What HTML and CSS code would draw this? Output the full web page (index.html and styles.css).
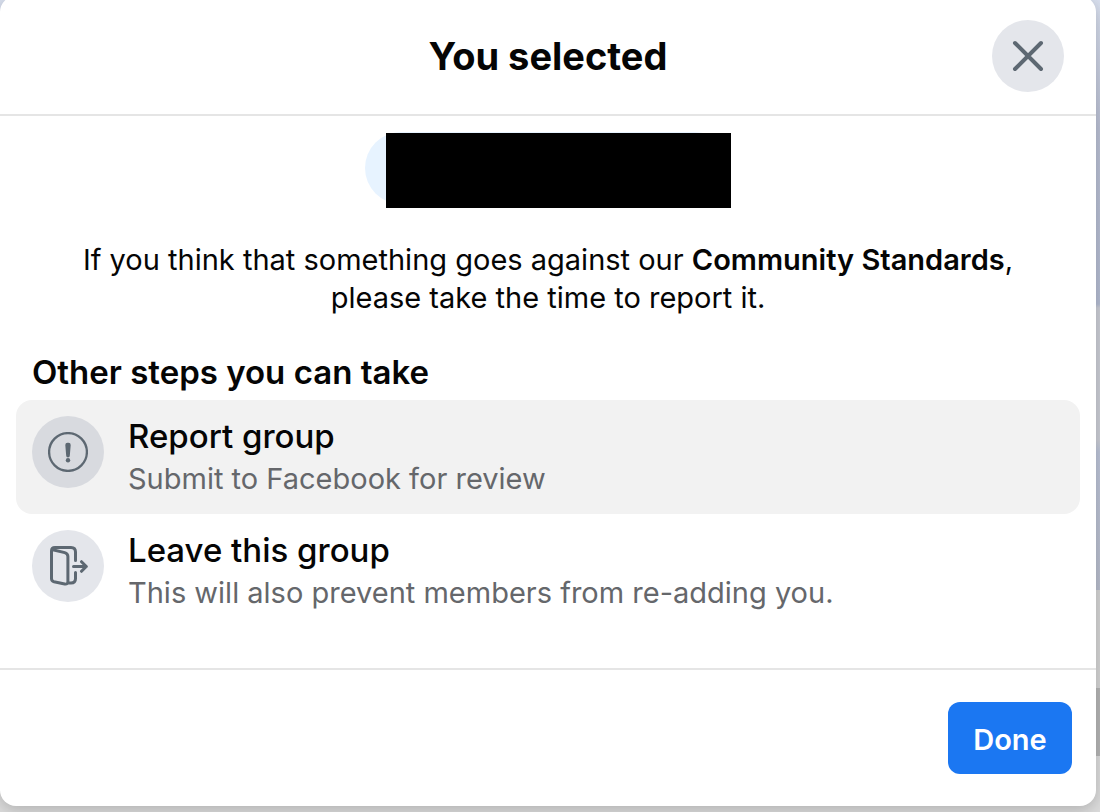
FILE: index.html
```html
<!DOCTYPE html>
<html lang="en">
<head>
    <meta charset="UTF-8">
    <meta name="viewport" content="width=device-width, initial-scale=1.0">
    <title>You selected</title>
    <link rel="stylesheet" href="styles.css">
</head>
<body>
    <main class="dialog">
        <header class="dialog-header">
            <h1>You selected</h1>
            <button type="button" class="close-button" aria-label="Close">
                <svg width="40" height="40" viewBox="0 0 40 40" fill="none" stroke="currentColor" stroke-width="4" stroke-linecap="round">
                    <path d="M7 7l26 26M33 7L7 33"/>
                </svg>
            </button>
        </header>

        <div class="dialog-body">
            <div class="selected-tag"><span class="redacted"></span></div>
            <p class="notice">If you think that something goes against our <b>Community Standards</b>, please take the time to report it.</p>

            <h2>Other steps you can take</h2>
            <button type="button" class="step active">
                <span class="step-icon">
                    <svg width="40" height="40" viewBox="0 0 40 40">
                        <circle cx="20" cy="20" r="18.9" fill="none" stroke="currentColor" stroke-width="2.3"/>
                        <path d="M17.3 12.9a2.2 2.2 0 0 1 2.2-2.2h1a2.2 2.2 0 0 1 2.2 2.2l-.9 10.8a1.7 1.7 0 0 1-3.6 0z" fill="currentColor"/>
                        <circle cx="20" cy="28.2" r="2.2" fill="currentColor"/>
                    </svg>
                </span>
                <span class="step-text">
                    <span class="step-title">Report group</span>
                    <span class="step-info">Submit to Facebook for review</span>
                </span>
            </button>
            <button type="button" class="step">
                <span class="step-icon">
                    <svg width="40" height="40" viewBox="0 0 40 40" fill="none" stroke="currentColor" stroke-width="3" stroke-linecap="round" stroke-linejoin="round">
                        <path d="M3.7 3.5l13 3.1q3.2.8 3.2 4v24.8q0 3.3-3.2 2.6L6 35.8q-2.5-.6-2.5-3.2V5q0-3.5 3.5-3.5h16q4.5 0 4.5 4.5v8.5M27.5 26.5v6q0 4.5-4.5 4.5h-3"/>
                        <path d="M25.5 20.5h12.7M33.5 15.7l4.8 4.8-4.8 4.8"/>
                    </svg>
                </span>
                <span class="step-text">
                    <span class="step-title">Leave this group</span>
                    <span class="step-info">This will also prevent members from re-adding you.</span>
                </span>
            </button>
        </div>

        <footer class="dialog-footer">
            <button type="button" class="done-button">Done</button>
        </footer>
    </main>
</body>
</html>
```
FILE: styles.css
```css
* {
    box-sizing: border-box;
}
body {
    margin: 0;
    min-height: 100vh;
    overflow: hidden;
    font-family: Inter, "Liberation Sans", sans-serif;
    color: #050505;
    /* dimmed page behind the dialog */
    background: linear-gradient(#d9e0ef 0, #bac0d4 128px, #b4bcd2 304px, #cbcdd5 308px, #cbcdd5 440px, #bcc4d8 452px, #b8bdcc 590px, #d4d4d4 590px, #d4d4d4 688px, #b5b5b5 688px, #b5b5b5 756px, #dcdcdc 756px);
}
h1, h2, p {
    margin: 0;
}
button {
    border: 0;
    font-family: inherit;
    cursor: pointer;
}

.dialog {
    margin: -4px 4px 0 0;
    background-color: white;
    border-radius: 16px;
    box-shadow: 0 4px 16px rgba(0, 0, 0, 0.2);
}
.dialog-header {
    display: grid;
    grid-template-columns: 72px 1fr 72px;
    align-items: center;
    padding: 24px 32px 22px;
    border-bottom: 2px solid #e5e5e5;
}
.dialog-header h1 {
    grid-column: 2;
    font-size: 38px;
    line-height: 48px;
    font-weight: 700;
    text-align: center;
}
.close-button {
    display: flex;
    align-items: center;
    justify-content: center;
    width: 72px;
    height: 72px;
    padding: 0;
    border-radius: 50%;
    background-color: #e4e6eb;
    color: #5d6872;
}

.dialog-body {
    padding: 16px 16px 40px;
}
.selected-tag {
    position: relative;
    width: 366px;
    height: 72px;
    margin: 0 auto;
    border-radius: 36px;
    background-color: #e7f3ff;
}
/* black bar laid over the tag */
.redacted {
    position: absolute;
    top: 1px;
    right: 0;
    width: 345px;
    height: 75px;
    background-color: black;
}
.notice {
    margin-top: 37px;
    padding: 0 32px;
    font-size: 29px;
    line-height: 38px;
    text-align: center;
}
.notice b {
    font-weight: 600;
}
.dialog-body h2 {
    margin-top: 35px;
    padding: 0 16px 8px;
    font-size: 33px;
    line-height: 40px;
    font-weight: 600;
}

.step {
    display: flex;
    align-items: flex-start;
    gap: 24px;
    width: 100%;
    padding: 16px;
    border-radius: 16px;
    background-color: white;
    color: #050505;
    text-align: left;
}
.step.active {
    background-color: #f2f2f2;
}
.step-icon {
    display: flex;
    align-items: center;
    justify-content: center;
    flex-shrink: 0;
    width: 72px;
    height: 72px;
    border-radius: 50%;
    background-color: #e4e6eb;
    color: #5d6872;
}
.active .step-icon {
    background-color: #d8dadf;
}
.step-text {
    display: flex;
    flex-direction: column;
    gap: 4px;
}
.step-title {
    font-size: 33px;
    line-height: 40px;
    font-weight: 500;
}
.step-info {
    font-size: 29px;
    line-height: 38px;
    color: #65676b;
}

.dialog-footer {
    display: flex;
    justify-content: flex-end;
    padding: 32px 24px;
    border-top: 2px solid #e5e5e5;
}
.done-button {
    min-width: 124px;
    height: 72px;
    padding: 2px 24px 0;
    border-radius: 12px;
    background-color: #1b77f2;
    color: white;
    font-size: 29px;
    font-weight: 600;
}
```
